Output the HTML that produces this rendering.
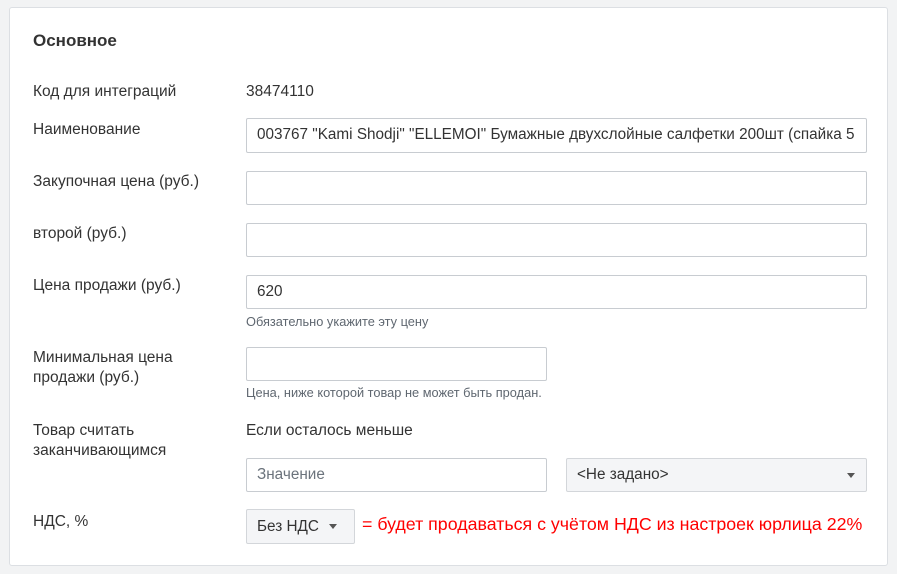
<!DOCTYPE html>
<html><head><meta charset="utf-8"><style>
body{margin:0;width:897px;height:574px;background:#f2f3f4;font-family:"Liberation Sans",sans-serif;color:#333;position:relative;overflow:hidden}
.card{position:absolute;left:9px;top:7px;width:879px;height:559px;background:#fff;border:1px solid #dcdfe3;border-radius:3px;box-sizing:border-box}
.a{position:absolute;font-size:15.5px;line-height:20px;white-space:nowrap}
.in{position:absolute;box-sizing:border-box;border:1px solid #c8ccd1;border-radius:2px;background:#fff;font-size:15.3px;line-height:32px;padding-left:10px;white-space:nowrap;overflow:hidden}
.sel{position:absolute;box-sizing:border-box;border:1px solid #d3d6da;border-radius:2px;background:#f4f5f7;font-size:15.3px;line-height:32px;padding-left:10px;white-space:nowrap}
.tri{position:absolute;width:0;height:0;border-left:4.5px solid transparent;border-right:4.5px solid transparent;border-top:5px solid #555}
.hint{position:absolute;font-size:12.8px;color:#5f6770;white-space:nowrap}
</style></head><body>
<div class="card"></div>
<div class="a" style="left:33px;top:31px;font-size:17px;font-weight:bold;color:#333">Основное</div>
<div class="a" style="left:33px;top:82px">Код для интеграций</div>
<div class="a" style="left:246px;top:82px">38474110</div>
<div class="a" style="left:33px;top:120px">Наименование</div>
<div class="in" style="left:246px;top:118px;width:621px;height:35px">003767 "Kami Shodji" "ELLEMOI" Бумажные двухслойные салфетки 200шт (спайка 5</div>
<div class="a" style="left:33px;top:172px">Закупочная цена (руб.)</div>
<div class="in" style="left:246px;top:171px;width:621px;height:34px"></div>
<div class="a" style="left:33px;top:224px">второй (руб.)</div>
<div class="in" style="left:246px;top:223px;width:621px;height:34px"></div>
<div class="a" style="left:33px;top:276px">Цена продажи (руб.)</div>
<div class="in" style="left:246px;top:275px;width:621px;height:34px">620</div>
<div class="hint" style="left:246px;top:314px">Обязательно укажите эту цену</div>
<div class="a" style="left:33px;top:348px">Минимальная цена<br>продажи (руб.)</div>
<div class="in" style="left:246px;top:347px;width:301px;height:34px"></div>
<div class="hint" style="left:246px;top:385px">Цена, ниже которой товар не может быть продан.</div>
<div class="a" style="left:33px;top:421px">Товар считать<br>заканчивающимся</div>
<div class="a" style="left:246px;top:421px">Если осталось меньше</div>
<div class="in" style="left:246px;top:458px;width:301px;height:34px;color:#6b737c">Значение</div>
<div class="sel" style="left:566px;top:458px;width:301px;height:34px">&lt;Не задано&gt;<div class="tri" style="left:280px;top:14px"></div></div>
<div class="a" style="left:33px;top:512px">НДС, %</div>
<div class="sel" style="left:246px;top:509px;width:109px;height:35px;line-height:33px">Без НДС<div class="tri" style="left:82px;top:14px"></div></div>
<div class="a" style="left:362px;top:514px;font-size:17.8px;color:#f00">= будет продаваться с учётом НДС из настроек юрлица 22%</div>
</body></html>
